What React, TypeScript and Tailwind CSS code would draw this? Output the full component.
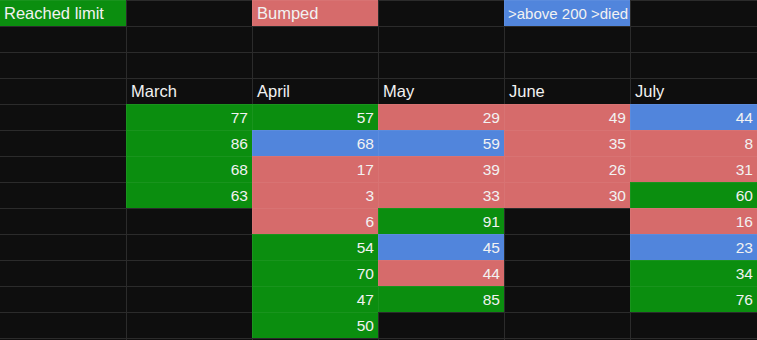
import React from "react";

type C = "G" | "P" | "B" | "";
type Cell = { t?: string; c?: C; num?: boolean; sm?: boolean };

const fill: Record<string, string> = {
  G: "bg-[#0b8e0f] border-white/[0.06]",
  P: "bg-[#d66b6b] border-white/[0.06]",
  B: "bg-[#5185dc] border-white/[0.06]",
  "": "bg-[#0e0e0e] border-[#2b2b2b]",
};

const e: Cell = {};
const n = (t: string, c: C): Cell => ({ t, c, num: true });

const rows: Cell[][] = [
  [{ t: "Reached limit", c: "G" }, e, { t: "Bumped", c: "P" }, e, { t: ">above 200 >died", c: "B", sm: true }, e],
  [e, e, e, e, e, e],
  [e, e, e, e, e, e],
  [e, { t: "March" }, { t: "April" }, { t: "May" }, { t: "June" }, { t: "July" }],
  [e, n("77", "G"), n("57", "G"), n("29", "P"), n("49", "P"), n("44", "B")],
  [e, n("86", "G"), n("68", "B"), n("59", "B"), n("35", "P"), n("8", "P")],
  [e, n("68", "G"), n("17", "P"), n("39", "P"), n("26", "P"), n("31", "P")],
  [e, n("63", "G"), n("3", "P"), n("33", "P"), n("30", "P"), n("60", "G")],
  [e, e, n("6", "P"), n("91", "G"), e, n("16", "P")],
  [e, e, n("54", "G"), n("45", "B"), e, n("23", "B")],
  [e, e, n("70", "G"), n("44", "P"), e, n("34", "G")],
  [e, e, n("47", "G"), n("85", "G"), e, n("76", "G")],
  [e, e, n("50", "G"), e, e, e],
];

export default function App() {
  return (
    <div
      className="w-[757px] h-[340px] bg-[#0e0e0e] overflow-hidden text-[16.5px] text-[#f2f2f2]"
      style={{ fontFamily: '"Liberation Sans", Arial, sans-serif' }}
    >
      <div className="grid grid-cols-[126px_126px_126px_126px_126px_127px] auto-rows-[26px]">
        {rows.flatMap((row, r) =>
          row.map((cell, i) => (
            <div
              key={`${r}-${i}`}
              className={`border-t ${i === 0 ? "" : "border-l"} ${fill[cell.c ?? ""]} leading-[25px] whitespace-nowrap overflow-hidden ${
                cell.num ? "text-right pr-[4px] text-[15.5px]" : cell.sm ? "pl-[3px] text-[15px]" : "pl-[4px]"
              }`}
            >
              {cell.t}
            </div>
          ))
        )}
        {[0, 1, 2, 3, 4, 5].map((i) => (
          <div key={`b-${i}`} className={`border-t ${i === 0 ? "" : "border-l"} border-[#2b2b2b]`} />
        ))}
      </div>
    </div>
  );
}
